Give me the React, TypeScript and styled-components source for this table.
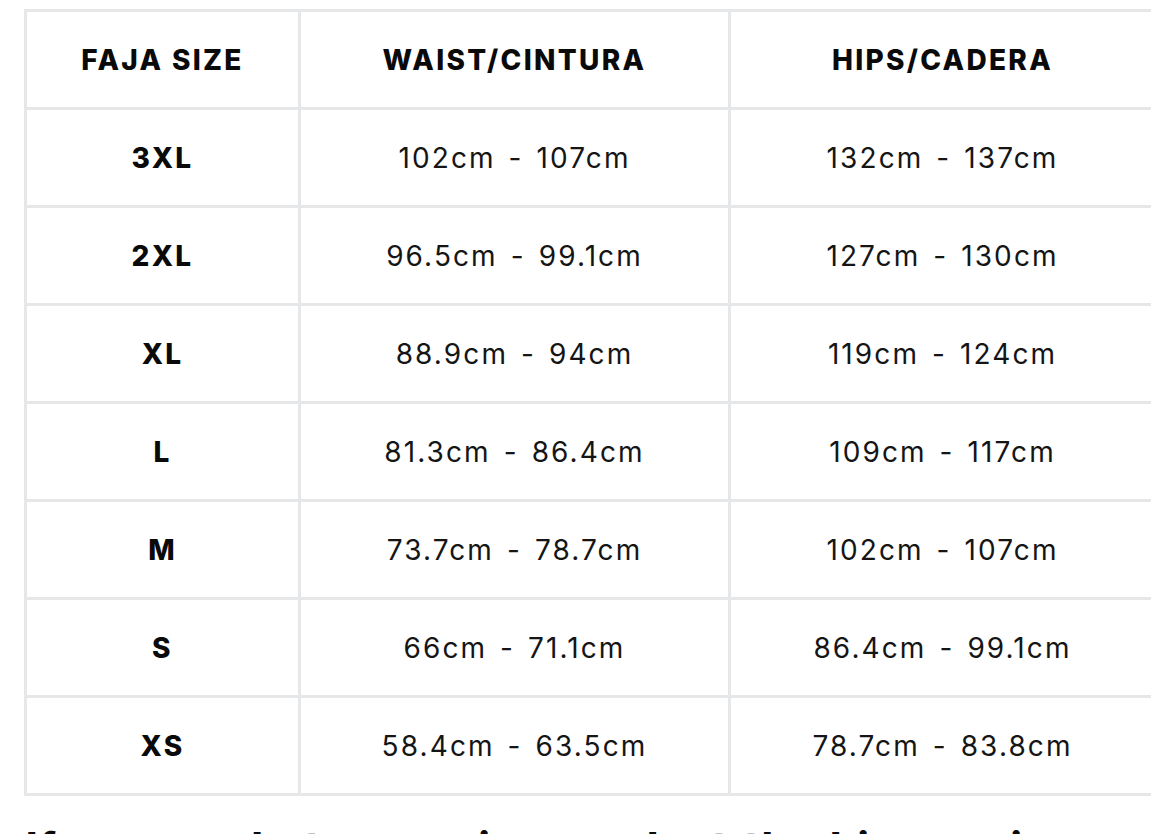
import React from 'react';
import styled, { createGlobalStyle } from 'styled-components';

const GlobalStyle = createGlobalStyle`
  html, body {
    margin: 0;
    padding: 0;
    background: #ffffff;
    overflow: hidden;
  }
  body {
    font-family: 'Inter', 'Liberation Sans', sans-serif;
    color: #111111;
  }
`;

const Page = styled.div`
  width: 1151px;
  height: 834px;
  overflow: hidden;
  padding: 9px 0 0 24px;
  box-sizing: border-box;
`;

const Table = styled.table`
  width: 1130px;
  table-layout: fixed;
  border-collapse: collapse;
  border: 3px solid #e6e7e9;
`;

const Col = styled.col<{ $w: number }>`
  width: ${(p) => p.$w}px;
`;

const HeadCell = styled.th`
  height: 95px;
  padding: 0;
  border: 3px solid #e6e7e9;
  text-align: center;
  vertical-align: middle;
  font-size: 28px;
  font-weight: 800;
  letter-spacing: 2.3px;
  color: #0a0a0a;
`;

const SizeCell = styled.td`
  height: 95px;
  padding: 0;
  border: 3px solid #e6e7e9;
  text-align: center;
  vertical-align: middle;
  font-size: 28px;
  font-weight: 800;
  letter-spacing: 2.3px;
  color: #0a0a0a;
`;

const RangeCell = styled.td`
  height: 95px;
  padding: 0;
  border: 3px solid #e6e7e9;
  text-align: center;
  vertical-align: middle;
  font-size: 28px;
  font-weight: 400;
  letter-spacing: 2.1px;
  word-spacing: 3px;
  white-space: pre;
  color: #151515;
`;

const Note = styled.p`
  margin: 27px 0 0 2px;
  font-size: 40px;
  line-height: 48px;
  font-weight: 800;
  letter-spacing: 2px;
  word-spacing: 4px;
  white-space: nowrap;
  color: #0a0a0a;
`;

const rows = [
  { size: '3XL', waist: ['102cm', '107cm'], hips: ['132cm', '137cm'] },
  { size: '2XL', waist: ['96.5cm', '99.1cm'], hips: ['127cm', '130cm'] },
  { size: 'XL', waist: ['88.9cm', '94cm'], hips: ['119cm', '124cm'] },
  { size: 'L', waist: ['81.3cm', '86.4cm'], hips: ['109cm', '117cm'] },
  { size: 'M', waist: ['73.7cm', '78.7cm'], hips: ['102cm', '107cm'] },
  { size: 'S', waist: ['66cm', '71.1cm'], hips: ['86.4cm', '99.1cm'] },
  { size: 'XS', waist: ['58.4cm', '63.5cm'], hips: ['78.7cm', '83.8cm'] },
];

const range = (r: string[]) => `${r[0]} - ${r[1]}`;

export default function App() {
  return (
    <Page>
      <GlobalStyle />
      <Table>
        <colgroup>
          <Col $w={274} />
          <Col $w={430} />
          <Col $w={426} />
        </colgroup>
        <thead>
          <tr>
            <HeadCell>FAJA SIZE</HeadCell>
            <HeadCell>WAIST/CINTURA</HeadCell>
            <HeadCell>HIPS/CADERA</HeadCell>
          </tr>
        </thead>
        <tbody>
          {rows.map((r) => (
            <tr key={r.size}>
              <SizeCell>{r.size}</SizeCell>
              <RangeCell>{range(r.waist)}</RangeCell>
              <RangeCell>{range(r.hips)}</RangeCell>
            </tr>
          ))}
        </tbody>
      </Table>
      <Note>If you are between sizes, select the bigger size</Note>
    </Page>
  );
}
